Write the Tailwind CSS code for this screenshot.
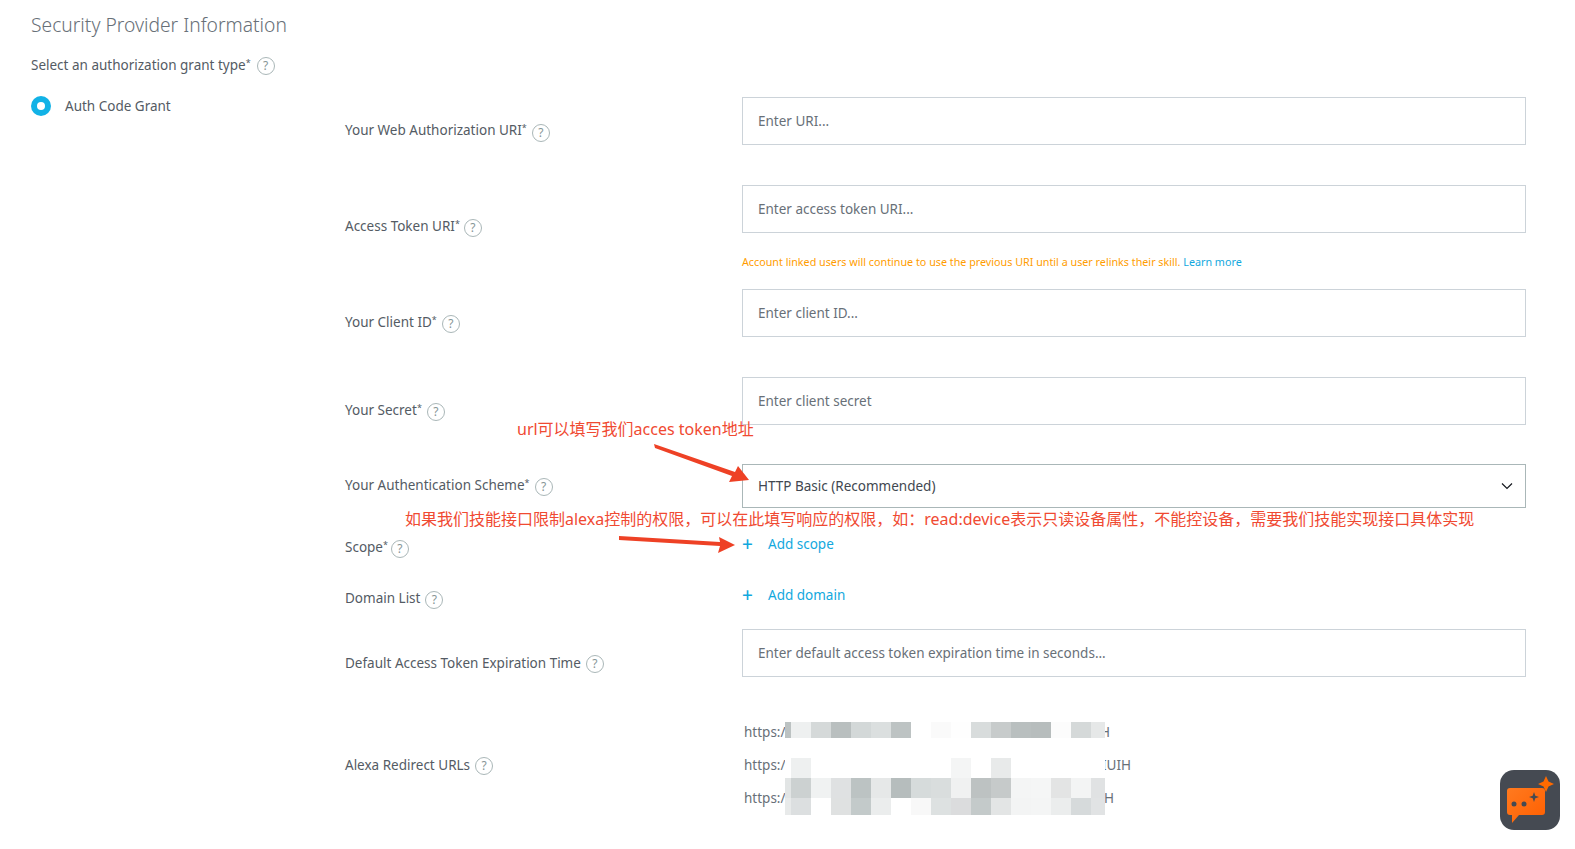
<!DOCTYPE html>
<html lang="en">
<head>
<meta charset="utf-8">
<title>Security Provider Information</title>
<script src="https://cdn.jsdelivr.net/npm/@tailwindcss/browser@4"></script>
</head>
<body class="bg-white">
<div class="relative w-[1575px] h-[849px] overflow-hidden bg-white font-['Noto_Sans','Noto_Sans_CJK_SC',sans-serif] text-[13.5px] leading-5 text-[#545b64]">

  <h1 class="pl-[31px] pt-[11px] h-[55px] text-[19.25px] leading-7 font-light text-[#687078]">Security Provider Information</h1>

  <div class="flex">
    <div class="w-[345px] pl-[31px] shrink-0">
      <div class="flex items-center h-5"><span>Select an authorization grant type<sup class="text-[9px]">*</sup></span><span class="ml-[6px] translate-y-[1px] w-[18px] h-[18px] rounded-full border border-[#aab7b8] text-[#879596] text-[12px] leading-4 text-center">?</span></div>
      <div class="flex items-center mt-[21px] h-5">
        <span class="w-5 h-5 rounded-full bg-[#12b2e6] flex items-center justify-center"><span class="w-2 h-2 rounded-full bg-white"></span></span>
        <span class="ml-[14px]">Auth Code Grant</span>
      </div>
    </div>

    <div class="w-[1182px] pt-[42px] shrink-0">
      <!-- row 1 -->
      <div class="flex h-[48px]">
        <div class="w-[397px] pt-[23px] flex items-center self-start"><span>Your Web Authorization URI<sup class="text-[9px]">*</sup></span><span class="ml-[5px] translate-y-[3px] w-[18px] h-[18px] rounded-full border border-[#aab7b8] text-[#879596] text-[12px] leading-4 text-center">?</span></div>
        <input placeholder="Enter URI..." class="w-[784px] h-[48px] px-[15px] border border-[#ccd3d9] placeholder:text-[#687078] bg-white">
      </div>
      <!-- row 2 -->
      <div class="flex mt-[40px] h-[64px]">
        <div class="w-[397px] pt-[31px] flex items-center self-start"><span>Access Token URI<sup class="text-[9px]">*</sup></span><span class="ml-[4px] translate-y-[2px] w-[18px] h-[18px] rounded-full border border-[#aab7b8] text-[#879596] text-[12px] leading-4 text-center">?</span></div>
        <div class="w-[784px]">
          <input placeholder="Enter access token URI..." class="w-full h-[48px] px-[15px] border border-[#ccd3d9] placeholder:text-[#687078] bg-white">
          <p class="mt-[21px] text-[10.75px] leading-4 text-[#ff9d00]">Account linked users will continue to use the previous URI until a user relinks their skill. <span class="text-[#12a8de]">Learn more</span></p>
        </div>
      </div>
      <!-- row 3 -->
      <div class="flex mt-[40px] h-[48px]">
        <div class="w-[397px] pt-[23px] flex items-center self-start"><span>Your Client ID<sup class="text-[9px]">*</sup></span><span class="ml-[5px] translate-y-[2px] w-[18px] h-[18px] rounded-full border border-[#aab7b8] text-[#879596] text-[12px] leading-4 text-center">?</span></div>
        <input placeholder="Enter client ID..." class="w-[784px] h-[48px] px-[15px] border border-[#ccd3d9] placeholder:text-[#687078] bg-white">
      </div>
      <!-- row 4 -->
      <div class="flex mt-[40px] h-[48px]">
        <div class="w-[397px] pt-[23px] flex items-center self-start"><span>Your Secret<sup class="text-[9px]">*</sup></span><span class="ml-[5px] translate-y-[2px] w-[18px] h-[18px] rounded-full border border-[#aab7b8] text-[#879596] text-[12px] leading-4 text-center">?</span></div>
        <input placeholder="Enter client secret" class="w-[784px] h-[48px] px-[15px] border border-[#ccd3d9] placeholder:text-[#687078] bg-white">
      </div>
      <!-- row 5 -->
      <div class="flex mt-[39px] h-[44px]">
        <div class="w-[397px] pt-[11px] flex items-center self-start"><span>Your Authentication Scheme<sup class="text-[9px]">*</sup></span><span class="ml-[5px] translate-y-[2px] w-[18px] h-[18px] rounded-full border border-[#aab7b8] text-[#879596] text-[12px] leading-4 text-center">?</span></div>
        <div class="w-[784px] h-[44px] pl-[15px] pr-[12px] border border-[#aab7b8] flex items-center justify-between text-[#414750]">
          <span>HTTP Basic (Recommended)</span>
          <svg width="12" height="8" viewBox="0 0 12 8" fill="none" stroke="#16191f" stroke-width="1.2"><path d="M1 1.500 6 6.500 11 1.500"/></svg>
        </div>
      </div>
      <!-- row 6 -->
      <div class="flex mt-[26px] h-[26px]">
        <div class="w-[397px] pt-[3px] flex items-center self-start"><span>Scope<sup class="text-[9px]">*</sup></span><span class="ml-[3px] translate-y-[2px] w-[18px] h-[18px] rounded-full border border-[#aab7b8] text-[#879596] text-[12px] leading-4 text-center">?</span></div>
        <div class="flex items-center h-5 text-[#12a8de]"><span class="w-[26px] text-[19px] leading-5 font-medium">+</span><span>Add scope</span></div>
      </div>
      <!-- row 7 -->
      <div class="flex mt-[25px] h-[34px]">
        <div class="w-[397px] flex items-center self-start pt-[3px]"><span>Domain List</span><span class="ml-[5px] translate-y-[2px] w-[18px] h-[18px] rounded-full border border-[#aab7b8] text-[#879596] text-[12px] leading-4 text-center">?</span></div>
        <div class="flex items-center h-5 text-[#12a8de]"><span class="w-[26px] text-[19px] leading-5 font-medium">+</span><span>Add domain</span></div>
      </div>
      <!-- row 8 -->
      <div class="flex mt-[10px] h-[48px]">
        <div class="w-[397px] pt-[24px] flex items-center self-start"><span>Default Access Token Expiration Time</span><span class="ml-[5px] translate-y-[1px] w-[18px] h-[18px] rounded-full border border-[#aab7b8] text-[#879596] text-[12px] leading-4 text-center">?</span></div>
        <input placeholder="Enter default access token expiration time in seconds..." class="w-[784px] h-[48px] px-[15px] border border-[#ccd3d9] placeholder:text-[#687078] bg-white">
      </div>
      <!-- row 9 -->
      <div class="flex mt-[45px]">
        <div class="w-[397px] pt-[33px] flex items-center self-start"><span>Alexa Redirect URLs</span><span class="ml-[5px] translate-y-[1px] w-[18px] h-[18px] rounded-full border border-[#aab7b8] text-[#879596] text-[12px] leading-4 text-center">?</span></div>
        <div class="pl-[2px] flex flex-col gap-[13px] text-[#687078]">
          <div class="flex h-5"><span class="w-[356px]">https:/</span><span>H</span></div>
          <div class="flex h-5"><span class="w-[358px]">https:/</span><span>IUIH</span></div>
          <div class="flex h-5"><span class="w-[360px]">https:/</span><span>H</span></div>
        </div>
      </div>
    </div>
  </div>

  <!-- mosaic redaction over URLs -->
  <div class="absolute left-[785px] top-[722px] grid grid-cols-[6px_repeat(15,20px)_14px] grid-rows-[16px_20px_20px_20px_17px]">
    <i class="bg-[#bcc2c2]"></i><i class="bg-[#eef0f0]"></i><i class="bg-[#d5d9d9]"></i><i class="bg-[#b9bfbf]"></i><i class="bg-[#d3d8d8]"></i><i class="bg-[#dbdfdf]"></i><i class="bg-[#bdc3c3]"></i><i class="bg-[#ffffff]"></i><i class="bg-[#fafafa]"></i><i class="bg-[#fefefe]"></i><i class="bg-[#d8dcdc]"></i><i class="bg-[#c7cbcb]"></i><i class="bg-[#b9bfbf]"></i><i class="bg-[#b7bdbd]"></i><i class="bg-[#fcfcfc]"></i><i class="bg-[#d5d9d9]"></i><i class="bg-[#e6e8e8]"></i>
    <i class="col-span-17"></i>
    <i class="bg-white"></i><i class="bg-[#eef0f0]"></i><i class="bg-white"></i><i class="bg-white"></i><i class="bg-white"></i><i class="bg-white"></i><i class="bg-white"></i><i class="bg-white"></i><i class="bg-white"></i><i class="bg-[#f4f5f5]"></i><i class="bg-white"></i><i class="bg-[#e8eaea]"></i><i class="bg-white"></i><i class="bg-white"></i><i class="bg-white"></i><i class="bg-white"></i><i class="bg-white"></i>
    <i class="bg-[#e2e5e5]"></i><i class="bg-[#ccd1d1]"></i><i class="bg-[#f0f2f2]"></i><i class="bg-[#dfe1e2]"></i><i class="bg-[#bcc3c3]"></i><i class="bg-[#e6e8e8]"></i><i class="bg-[#b6bdbd]"></i><i class="bg-[#d6dbdb]"></i><i class="bg-[#d9dddd]"></i><i class="bg-[#f0f1f1]"></i><i class="bg-[#bdc2c2]"></i><i class="bg-[#c6caca]"></i><i class="bg-[#f4f5f5]"></i><i class="bg-[#f5f6f6]"></i><i class="bg-[#e3e4e4]"></i><i class="bg-[#f3f4f4]"></i><i class="bg-[#e0e2e3]"></i>
    <i class="bg-[#e8eaea]"></i><i class="bg-[#dcdfe0]"></i><i class="bg-white"></i><i class="bg-[#dfe1e1]"></i><i class="bg-[#c3caca]"></i><i class="bg-[#ebeded]"></i><i class="bg-white"></i><i class="bg-[#f8f8f8]"></i><i class="bg-[#dde1e1]"></i><i class="bg-[#dbdcdd]"></i><i class="bg-[#c4caca]"></i><i class="bg-[#e3e5e5]"></i><i class="bg-[#f3f4f4]"></i><i class="bg-[#f4f5f5]"></i><i class="bg-[#ebeded]"></i><i class="bg-[#d6dadb]"></i><i class="bg-[#e1e3e4]"></i>
  </div>

  <!-- red annotations -->
  <p class="absolute left-[517px] top-[418px] text-[16px] leading-[22px] text-[#f04a32] whitespace-nowrap">url可以填写我们acces token地址</p>
  <p class="absolute left-[405px] top-[508px] text-[16px] leading-[22px] text-[#f04a32] whitespace-nowrap">如果我们技能接口限制alexa控制的权限，可以在此填写响应的权限，如：read:device表示只读设备属性，不能控设备，需要我们技能实现接口具体实现</p>
  <svg class="absolute left-0 top-0 pointer-events-none" width="1575" height="849" viewBox="0 0 1575 849">
    <polygon fill="#ee4125" points="654,444 655,448 732,476 729,482 749,480 738,466 735,472"/>
    <polygon fill="#ee4125" points="619,536 619,540 720,546 718,553 735,545 719,537 720,542"/>
  </svg>

  <!-- floating chat button -->
  <svg class="absolute left-[1500px] top-[770px]" width="60" height="60" viewBox="0 0 60 60">
    <defs><linearGradient id="bubble" x1="0" y1="0" x2="1" y2="1"><stop offset="0" stop-color="#ff7a1f"/><stop offset="1" stop-color="#ff5f00"/></linearGradient></defs>
    <rect width="60" height="60" rx="14" fill="#454a52"/>
    <path d="M10 18h32a3 3 0 0 1 3 3v21a3 3 0 0 1-3 3H19l-7 8v-8h-2a3 3 0 0 1-3-3V21a3 3 0 0 1 3-3z" fill="url(#bubble)"/>
    <path d="M46 6l2.500 5.500L54 14l-5.500 2.500L46 22l-2.500-5.500L38 14l5.500-2.500z" fill="#ff6a00"/>
    <path d="M34 22l1.300 3.700L39 27l-3.700 1.300L34 32l-1.300-3.700L29 27l3.700-1.300z" fill="#454a52"/>
    <circle cx="14" cy="34" r="2.500" fill="#454a52"/>
    <circle cx="24" cy="34" r="2.500" fill="#454a52"/>
  </svg>
</div>
</body>
</html>
